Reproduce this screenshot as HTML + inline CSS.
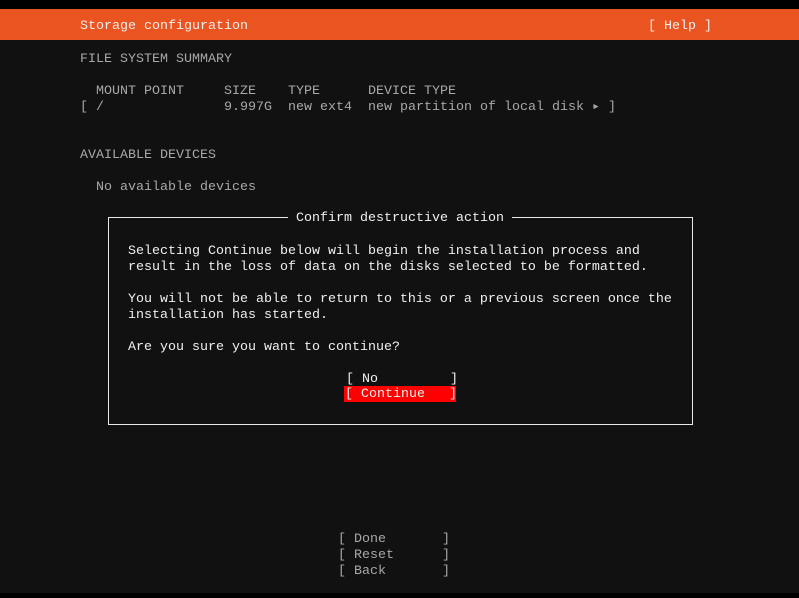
<!DOCTYPE html>
<html><head><style>
html,body{margin:0;padding:0;}
body{width:799px;height:598px;background:#111111;position:relative;overflow:hidden;font-family:"Liberation Mono",monospace;font-size:13.33px;}
.t{position:absolute;height:16px;line-height:16px;white-space:pre;color:#a8a8a8;}
.w{color:#f0f0f0;}
</style></head><body>
<div style="position:absolute;left:0;top:0;width:799px;height:9px;background:#000"></div>
<div style="position:absolute;left:0;top:9px;width:799px;height:31px;background:#e95420"></div>
<div style="position:absolute;left:0;top:593px;width:799px;height:5px;background:#000"></div>
<div class="t w" style="left:80px;top:19px">Storage configuration</div>
<div class="t w" style="left:648px;top:19px">[ Help ]</div>
<div class="t" style="left:80px;top:52px">FILE SYSTEM SUMMARY</div>
<div class="t" style="left:96px;top:84px">MOUNT POINT</div>
<div class="t" style="left:224px;top:84px">SIZE</div>
<div class="t" style="left:288px;top:84px">TYPE</div>
<div class="t" style="left:368px;top:84px">DEVICE TYPE</div>
<div class="t" style="left:80px;top:100px">[ /</div>
<div class="t" style="left:224px;top:100px">9.997G</div>
<div class="t" style="left:288px;top:100px">new ext4</div>
<div class="t" style="left:368px;top:100px">new partition of local disk ▸ ]</div>
<div class="t" style="left:80px;top:148px">AVAILABLE DEVICES</div>
<div class="t" style="left:96px;top:180px">No available devices</div>
<div style="position:absolute;left:108px;top:217px;width:583px;height:206px;border:1px solid #e8e8e8"></div>
<div class="t w" style="left:288px;top:211px;background:#111;padding:0 8px">Confirm destructive action</div>
<div class="t w" style="left:128px;top:244px">Selecting Continue below will begin the installation process and</div>
<div class="t w" style="left:128px;top:260px">result in the loss of data on the disks selected to be formatted.</div>
<div class="t w" style="left:128px;top:292px">You will not be able to return to this or a previous screen once the</div>
<div class="t w" style="left:128px;top:308px">installation has started.</div>
<div class="t w" style="left:128px;top:340px">Are you sure you want to continue?</div>
<div class="t w" style="left:346px;top:372px">[ No         ]</div>
<div style="position:absolute;left:344px;top:386px;width:112px;height:16px;background:#ff0000"></div>
<div class="t w" style="left:345px;top:387px">[ Continue   ]</div>
<div class="t" style="left:338px;top:532px">[ Done       ]</div>
<div class="t" style="left:338px;top:548px">[ Reset      ]</div>
<div class="t" style="left:338px;top:564px">[ Back       ]</div>
</body></html>
